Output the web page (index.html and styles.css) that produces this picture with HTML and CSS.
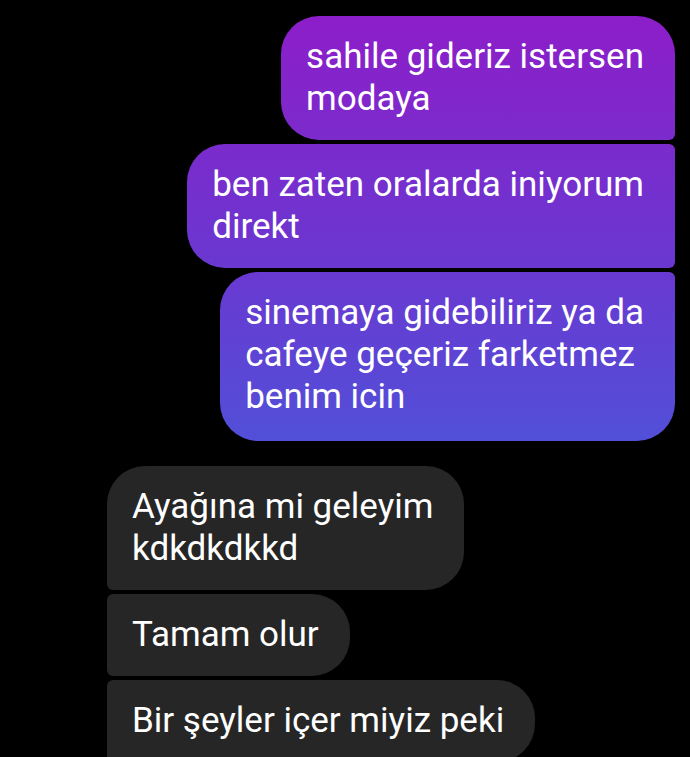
FILE: index.html
```html
<!DOCTYPE html>
<html lang="tr">

<head>
  <meta charset="UTF-8" />
  <meta name="viewport" content="width=device-width, initial-scale=1.0" />
  <title>Sohbet</title>
  <link rel="stylesheet" href="styles.css">
</head>

<body>
  <div class="thread">
    <div class="group sent">
      <div class="msg first">sahile gideriz istersen<br>modaya</div>
      <div class="msg">ben zaten oralarda iniyorum<br>direkt</div>
      <div class="msg last">sinemaya gidebiliriz ya da<br>cafeye geçeriz farketmez<br>benim icin</div>
    </div>

    <div class="group received">
      <div class="msg first">Ayağına mi geleyim<br>kdkdkdkkd</div>
      <div class="msg">Tamam olur</div>
      <div class="msg">Bir şeyler içer miyiz peki</div>
    </div>
  </div>
</body>

</html>
```

FILE: styles.css
```css
body {
  margin: 0;
  background: #000;
  font-family: Roboto, "Noto Sans", sans-serif;
  height: 100vh;
  overflow: hidden;
}

.thread {
  display: flex;
  flex-direction: column;
  gap: 25px;
  padding: 16px 15px 0 107px;
}

.group {
  display: flex;
  flex-direction: column;
  gap: 4px;
}

.sent {
  align-items: flex-end;
}

.received {
  align-items: flex-start;
}

.msg {
  white-space: nowrap;
  padding: 20px 31px 20px 25px;
  font-size: 35px;
  line-height: 42px;
  color: #fff;
  border-radius: 38px;
}

.msg.last {
  padding-bottom: 23px;
}

/* sent bubbles share one gradient across the screen */
.sent .msg {
  background: linear-gradient(180deg, #8f1cc8 0px, #6c36d0 250px, #5150d8 445px) fixed;
  border-top-right-radius: 6px;
  border-bottom-right-radius: 6px;
}

.sent .msg.first {
  border-top-right-radius: 38px;
}

.sent .msg.last {
  border-bottom-right-radius: 38px;
}

.received .msg {
  background: #262626;
  border-top-left-radius: 6px;
  border-bottom-left-radius: 6px;
}

.received .msg.first {
  border-top-left-radius: 38px;
}
```
